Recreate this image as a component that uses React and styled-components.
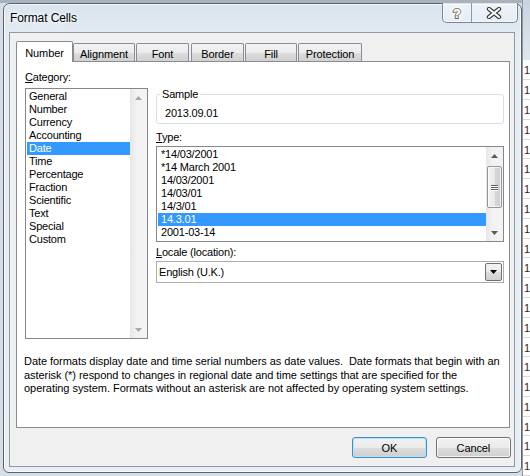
import styled, { createGlobalStyle } from 'styled-components'

const GlobalStyle = createGlobalStyle`
  html, body { margin: 0; padding: 0; }
  body {
    font-family: "Liberation Sans", Arial, sans-serif;
    font-size: 11px;
    color: #000;
  }
  * { box-sizing: border-box; }
`

const Screen = styled.div`
  width: 530px;
  height: 476px;
  overflow: hidden;
  display: flex;
  align-items: flex-start;
  background: linear-gradient(#a9b3bd 0 3px, #d5dde6 3px);
`

const Window = styled.div`
  margin: 3px 0 0 3px;
  width: 520px;
  height: 470px;
  border: 1px solid #59636e;
  border-radius: 7px 7px 6px 6px;
  background: linear-gradient(180deg, #d9e4ef 0%, #e6edf4 40px, #e9eef3 100%);
  box-shadow: inset 0 0 0 1px rgba(255, 255, 255, 0.75);
  display: flex;
  flex-direction: column;
`

const TitleBar = styled.div`
  position: relative;
  height: 28px;
  display: flex;
  align-items: center;
  padding-left: 6px;
  font-size: 12px;
  letter-spacing: -0.1px;
  text-shadow: 0 0 6px #fff, 0 0 3px #fff;
`

const CaptionGroup = styled.div`
  position: absolute;
  top: -1px;
  right: 3px;
  height: 20px;
  display: flex;
  border: 1px solid #7b8794;
  border-top: none;
  border-radius: 0 0 5px 5px;
  background: linear-gradient(180deg, rgba(255,255,255,0.55), rgba(232,238,245,0.8));
  box-shadow: inset 0 0 0 1px rgba(255,255,255,0.6);
  overflow: hidden;
`

const CaptionButton = styled.div`
  width: ${p => p.$w}px;
  height: 100%;
  display: flex;
  align-items: center;
  justify-content: center;
  & + & { border-left: 1px solid #8d99a6; }
`

const Client = styled.div`
  flex: 1;
  margin: 0 6px 5px 5px;
  border: 1px solid #8e9aa6;
  background: #f0f0f0;
  padding: 8px 3px 8px 6px;
  display: flex;
  flex-direction: column;
`

const TabStrip = styled.div`
  height: 21px;
  display: flex;
  align-items: flex-end;
`

const Tab = styled.div`
  width: ${p => p.$w}px;
  margin-left: ${p => p.$ml || 0}px;
  height: ${p => (p.$active ? 21 : 19)}px;
  border: 1px solid #898c95;
  border-bottom: none;
  border-radius: 2px 2px 0 0;
  display: flex;
  align-items: center;
  justify-content: center;
  padding-top: ${p => (p.$active ? 1 : 2)}px;
  letter-spacing: -0.1px;
  position: relative;
  z-index: ${p => (p.$active ? 2 : 0)};
  background: ${p => (p.$active
    ? '#fff'
    : 'linear-gradient(180deg, #f3f3f3 0%, #ebebeb 50%, #dddddd 50%, #cfcfcf 100%)')};
`

const Panel = styled.div`
  position: relative;
  z-index: 1;
  margin-top: -1px;
  width: 494px;
  height: 367px;
  border: 1px solid #898c95;
  background: #fff;
  padding: 9px 5px 0 8px;
  display: grid;
  grid-template-columns: 123px 348px;
  column-gap: 8px;
  align-content: start;
`

const Column = styled.div`
  display: flex;
  flex-direction: column;
`

const Label = styled.div`
  height: 13px;
  line-height: 13px;
  letter-spacing: -0.2px;
  margin-top: ${p => p.$mt || 0}px;
  margin-bottom: ${p => p.$mb || 0}px;
  u { text-decoration: underline; text-underline-offset: 1px; }
`

const ListBox = styled.div`
  height: ${p => p.$h}px;
  border: 1px solid #828790;
  background: #fff;
  display: flex;
  overflow: hidden;
`

const Items = styled.div`
  flex: 1;
  padding: 1px 0 0 1px;
  display: flex;
  flex-direction: column;
`

const Item = styled.div`
  height: 13px;
  line-height: 13px;
  padding-left: ${p => p.$pl}px;
  letter-spacing: -0.2px;
  white-space: nowrap;
  background: ${p => (p.$selected ? '#3399ff' : 'transparent')};
  color: ${p => (p.$selected ? '#fff' : '#000')};
`

const ScrollBar = styled.div`
  width: 17px;
  display: flex;
  flex-direction: column;
  background: linear-gradient(90deg, #e6e6e6, #f3f3f3 40%, #f3f3f3);
`

const ArrowButton = styled.div`
  height: 17px;
  display: flex;
  align-items: center;
  justify-content: center;
`

const Track = styled.div`
  flex: 1;
  display: flex;
  flex-direction: column;
  padding: 2px 1px 0 1px;
`

const Thumb = styled.div`
  height: 42px;
  border: 1px solid #959595;
  border-radius: 2px;
  background: linear-gradient(90deg, #f4f4f4 0%, #e8e8e8 50%, #d6d6d6 51%, #cfcfcf 100%);
  box-shadow: inset 0 0 0 1px rgba(255,255,255,0.7);
  display: flex;
  flex-direction: column;
  align-items: center;
  justify-content: center;
  gap: 1px;
`

const Grip = styled.div`
  width: 7px;
  height: 1px;
  background: #5e5e5e;
  box-shadow: 0 1px 0 #fff;
`

const Fieldset = styled.fieldset`
  margin: 17px 0 0 0;
  padding: 6px 0 3px 8px;
  border: 1px solid #d5dfe5;
  border-radius: 3px;
  min-width: 0;
`

const Legend = styled.legend`
  margin-left: -5px;
  padding: 0 2px;
  line-height: 13px;
  letter-spacing: -0.2px;
`

const Value = styled.div`
  height: 13px;
  line-height: 13px;
  letter-spacing: -0.2px;
`

const Combo = styled.div`
  height: 22px;
  border: 1px solid #abadb3;
  background: #fff;
  display: flex;
  align-items: center;
  padding: 1px 1px 1px 2px;
`

const ComboText = styled.div`
  flex: 1;
  letter-spacing: -0.2px;
`

const DropButton = styled.div`
  width: 17px;
  height: 100%;
  border: 1px solid #707070;
  border-radius: 2px;
  background: linear-gradient(180deg, #f2f2f2 0%, #ebebeb 50%, #dddddd 50%, #cfcfcf 100%);
  display: flex;
  align-items: center;
  justify-content: center;
`

const Description = styled.div`
  grid-column: 1 / 3;
  margin: 16px 0 0 -1px;
  line-height: 13.5px;
  letter-spacing: -0.05px;
  white-space: nowrap;
`

const ButtonRow = styled.div`
  margin-top: 9px;
  display: flex;
  justify-content: flex-end;
  gap: 9px;
`

const Button = styled.div`
  width: 75px;
  height: 21px;
  border: 1px solid ${p => (p.$default ? '#3c8fd0' : '#707070')};
  border-radius: 3px;
  background: linear-gradient(180deg, #f2f2f2 0%, #ebebeb 50%, #dddddd 50%, #cfcfcf 100%);
  box-shadow: inset 0 0 0 1px ${p => (p.$default ? '#b6e3f8' : 'rgba(255,255,255,0.8)')};
  display: flex;
  align-items: center;
  justify-content: center;
  letter-spacing: -0.1px;
`

const Sheet = styled.div`
  flex: 1;
  height: 476px;
  display: flex;
  flex-direction: column;
  border-left: 1px solid #8e969e;
`

const Ribbon = styled.div`
  height: 61px;
  background: linear-gradient(180deg, #c9d3de, #dfe6ee);
`

const SheetRow = styled.div`
  height: 20px;
  line-height: 20px;
  background: #fff;
  border-bottom: 1px solid #d9d9d9;
  color: #3a2410;
  font-size: 11px;
  padding-left: 1px;
  overflow: hidden;
`

const Triangle = ({ up, color }) => (
  <svg width="7" height="4" viewBox="0 0 7 4">
    <path d={up ? 'M0 4 L3.5 0 L7 4 Z' : 'M0 0 L7 0 L3.5 4 Z'} fill={color} />
  </svg>
)

const categories = ['General', 'Number', 'Currency', 'Accounting', 'Date', 'Time', 'Percentage',
  'Fraction', 'Scientific', 'Text', 'Special', 'Custom']
const types = ['*14/03/2001', '*14 March 2001', '14/03/2001', '14/03/01', '14/3/01', '14.3.01', '2001-03-14']
const tabs = [
  { name: 'Number', w: 57, active: true },
  { name: 'Alignment', w: 62 },
  { name: 'Font', w: 53, ml: 1 },
  { name: 'Border', w: 53, ml: 2 },
  { name: 'Fill', w: 52, ml: 1 },
  { name: 'Protection', w: 64, ml: 1 },
]

export default function App() {
  return (
    <>
      <GlobalStyle />
      <Screen>
        <Window>
          <TitleBar>
            Format Cells
            <CaptionGroup>
              <CaptionButton $w={28}>
                <svg width="14" height="14" viewBox="0 0 14 14">
                  <text x="7" y="12" textAnchor="middle" fontFamily="Liberation Sans, Arial, sans-serif"
                    fontWeight="bold" fontSize="13" fill="#fff" stroke="#3a3a3a" strokeWidth="2"
                    paintOrder="stroke">?</text>
                </svg>
              </CaptionButton>
              <CaptionButton $w={46}>
                <svg width="16" height="12" viewBox="0 0 16 12">
                  <path d="M3 2 L13 10 M13 2 L3 10" stroke="#3a3a3a" strokeWidth="4.4" strokeLinecap="round" />
                  <path d="M3 2 L13 10 M13 2 L3 10" stroke="#fff" strokeWidth="2.2" strokeLinecap="round" />
                </svg>
              </CaptionButton>
            </CaptionGroup>
          </TitleBar>
          <Client>
            <TabStrip>
              {tabs.map(t => (
                <Tab key={t.name} $w={t.w} $ml={t.ml} $active={t.active}>{t.name}</Tab>
              ))}
            </TabStrip>
            <Panel>
              <Column>
                <Label $mb={4}><u>C</u>ategory:</Label>
                <ListBox $h={251}>
                  <Items>
                    {categories.map(c => (
                      <Item key={c} $pl={2} $selected={c === 'Date'}>{c}</Item>
                    ))}
                  </Items>
                  <ScrollBar>
                    <ArrowButton><Triangle up color="#a8a8a8" /></ArrowButton>
                    <Track />
                    <ArrowButton><Triangle color="#a8a8a8" /></ArrowButton>
                  </ScrollBar>
                </ListBox>
              </Column>
              <Column>
                <Fieldset>
                  <Legend>Sample</Legend>
                  <Value>2013.09.01</Value>
                </Fieldset>
                <Label $mt={7} $mb={2}><u>T</u>ype:</Label>
                <ListBox $h={96}>
                  <Items>
                    {types.map(t => (
                      <Item key={t} $pl={3} $selected={t === '14.3.01'}>{t}</Item>
                    ))}
                  </Items>
                  <ScrollBar>
                    <ArrowButton><Triangle up color="#5a5a5a" /></ArrowButton>
                    <Track>
                      <Thumb><Grip /><Grip /><Grip /></Thumb>
                    </Track>
                    <ArrowButton><Triangle color="#5a5a5a" /></ArrowButton>
                  </ScrollBar>
                </ListBox>
                <Label $mt={4} $mb={2}><u>L</u>ocale (location):</Label>
                <Combo>
                  <ComboText>English (U.K.)</ComboText>
                  <DropButton><Triangle color="#000" /></DropButton>
                </Combo>
              </Column>
              <Description>
                Date formats display date and time serial numbers as date values.&nbsp; Date formats that begin with an<br />
                asterisk (*) respond to changes in regional date and time settings that are specified for the<br />
                operating system. Formats without an asterisk are not affected by operating system settings.
              </Description>
            </Panel>
            <ButtonRow>
              <Button $default>OK</Button>
              <Button>Cancel</Button>
            </ButtonRow>
          </Client>
        </Window>
        <Sheet>
          <Ribbon />
          {Array.from({ length: 21 }, (_, i) => <SheetRow key={i}>1</SheetRow>)}
        </Sheet>
      </Screen>
    </>
  )
}
